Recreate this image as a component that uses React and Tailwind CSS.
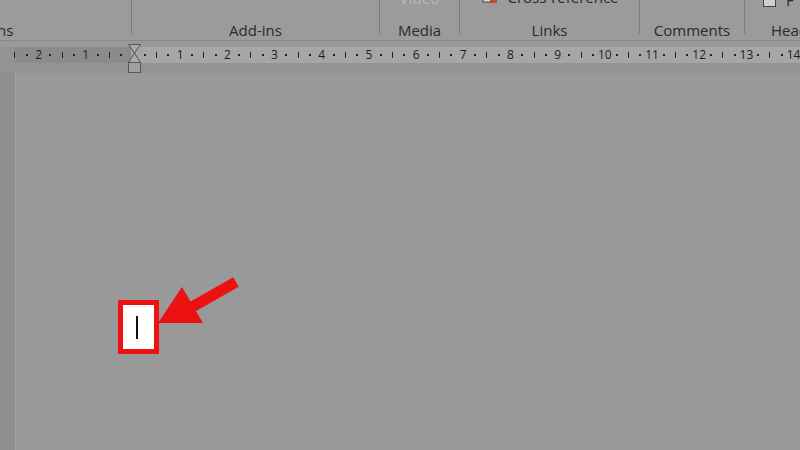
import React from 'react';

// ruler quarter marks, starting three cm left of the indent marker
const rulerCells = () => {
  const cells = [];
  for (let n = -3; n <= 15; n++) {
    cells.push({ kind: n === 0 ? 'none' : 'num', label: Math.abs(n) });
    cells.push({ kind: 'dot' });
    cells.push({ kind: 'tick' });
    cells.push({ kind: 'dot' });
  }
  return cells;
};

const Label = ({ children, className = '' }) => (
  <span className={`translate-y-[6px] text-[15px] leading-[20px] text-[#2a2a2a] ${className}`}>{children}</span>
);

export default function App() {
  return (
    <div className="relative h-[450px] w-[800px] overflow-hidden bg-[#999999] font-['Open_Sans',sans-serif]">
      {/* ribbon group labels */}
      <div className="flex h-[41px] border-b border-[#8a8a8a] bg-[#9b9b9b]">
        <div className="flex h-[34px] w-[132px] shrink-0 items-end border-r border-[#7c7c7c]">
          <Label className="-ml-[3px]">ns</Label>
        </div>
        <div className="flex h-[34px] w-[248px] shrink-0 items-end justify-center border-r border-[#7c7c7c]">
          <Label>Add-ins</Label>
        </div>
        <div className="flex h-[34px] w-[80px] shrink-0 flex-col items-center justify-between border-r border-[#7c7c7c]">
          <span className="-mt-[12px] text-[15px] leading-[20px] text-[#b8b8b8]">Video</span>
          <Label>Media</Label>
        </div>
        <div className="flex h-[34px] w-[180px] shrink-0 flex-col items-center justify-between border-r border-[#7c7c7c]">
          <div className="-mt-[13px] flex items-center gap-[9px] pl-[2px]">
            <svg width="16" height="16" viewBox="0 0 16 16" className="mt-[-2px]">
              <rect x="1" y="1" width="11" height="13" fill="#d8d8d8" stroke="#444" strokeWidth="1" />
              <rect x="8" y="9" width="7" height="6" fill="#c04a3a" />
            </svg>
            <span className="text-[15px] leading-[20px] text-[#2a2a2a]">Cross-reference</span>
          </div>
          <Label>Links</Label>
        </div>
        <div className="flex h-[34px] w-[105px] shrink-0 items-end justify-center border-r border-[#7c7c7c]">
          <Label>Comments</Label>
        </div>
        <div className="flex h-[34px] flex-1 flex-col justify-between pl-[26px]">
          <div className="-mt-[10px] flex items-center gap-[10px]">
            <div className="ml-[-8px] h-[13px] w-[13px] border border-[#444] bg-[#d0d0d0]" />
            <span className="text-[15px] leading-[20px] text-[#2a2a2a]">F</span>
          </div>
          <Label>Header</Label>
        </div>
      </div>

      {/* ruler */}
      <div className="relative h-[32px] bg-[#939393]">
        <div className="h-[6px] bg-[#999999]" />
        <div className="ml-[14px] flex h-[16px] overflow-hidden">
          <div className="relative flex h-full w-full bg-[#a6a6a6]">
            <div className="absolute left-0 top-0 h-full w-[117px] bg-[#8b8b8b]" />
            <div className="relative ml-[-28.5px] flex h-full items-center">
              {rulerCells().map((c, i) => (
                <div key={i} className="flex h-full w-[11.8px] shrink-0 items-center justify-center">
                  {c.kind === 'num' && (
                    <span className="text-[12px] leading-none text-[#1e1e1e]">{c.label}</span>
                  )}
                  {c.kind === 'dot' && <div className="h-[2px] w-[2px] bg-[#222]" />}
                  {c.kind === 'tick' && <div className="h-[6px] w-[1px] bg-[#222]" />}
                </div>
              ))}
            </div>
          </div>
        </div>
        {/* indent marker */}
        <svg className="absolute left-[127px] top-[3px]" width="15" height="30" viewBox="0 0 15 30">
          <polygon points="1.5,0.5 13.5,0.5 7.5,9" fill="#a9a9a9" stroke="#555" strokeWidth="1" />
          <polygon points="7.5,9 1.5,18.5 13.5,18.5" fill="#a9a9a9" stroke="#555" strokeWidth="1" />
          <rect x="1.5" y="18.5" width="12" height="10" fill="#a0a0a0" stroke="#555" strokeWidth="1" />
        </svg>
      </div>

      {/* document area */}
      <div className="flex h-[377px]">
        <div className="w-[16px] shrink-0 border-r border-[#a0a0a0] bg-[#8e8e8e]" />
        <div className="flex-1 bg-[#999999]" />
      </div>

      {/* highlighted cursor */}
      <div className="absolute left-[118px] top-[300px] flex h-[54px] w-[41px] items-center justify-center border-[5px] border-[#ee1111] bg-white pr-[3px]">
        <div className="h-[23px] w-[2px] bg-[#111]" />
      </div>

      {/* arrow */}
      <svg className="absolute left-[150px] top-[270px]" width="100" height="65" viewBox="0 0 100 65">
        <line x1="86" y1="12" x2="42" y2="37" stroke="#ee1111" strokeWidth="11" />
        <polygon points="8,53 32,17 53,53" fill="#ee1111" />
      </svg>
    </div>
  );
}
